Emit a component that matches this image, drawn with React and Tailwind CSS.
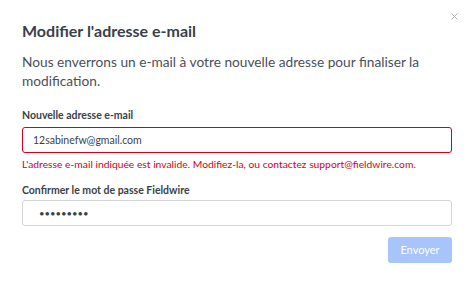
import React from 'react';

export default function App() {
  return (
    <div className="w-[474px] h-[286px] bg-white relative" style={{ fontFamily: 'Lato, "Open Sans", sans-serif' }}>
      <button className="absolute right-[16px] top-[13px] text-[#b5b8bd]">
        <svg width="7" height="7" viewBox="0 0 7 7" stroke="currentColor" strokeWidth="1">
          <path d="M0.5 0.5L6.5 6.5M6.5 0.5L0.5 6.5" />
        </svg>
      </button>
      <div className="px-[22px] pt-[20px]">
        <h2 className="text-[16px] leading-[22px] font-bold text-[#3a3f48]">Modifier l'adresse e-mail</h2>
        <p className="mt-[10px] text-[13.7px] leading-[19px] text-[#4a4f58]">
          Nous enverrons un e-mail à votre nouvelle adresse pour finaliser la modification.
        </p>
        <div className="mt-[18px]">
          <label className="block text-[10.5px] leading-[15px] font-bold text-[#3a3f48]">Nouvelle adresse e-mail</label>
          <input
            defaultValue="12sabinefw@gmail.com"
            className="mt-[4px] w-full h-[26px] px-[10px] rounded-[3px] border border-[#d0021b] text-[10.5px] text-[#3a3f48] outline-none"
            style={{ fontFamily: 'inherit' }}
          />
          <p className="mt-[4px] text-[10.3px] leading-[14px] text-[#d0021b]">
            L'adresse e-mail indiquée est invalide. Modifiez-la, ou contactez support@fieldwire.com.
          </p>
        </div>
        <div className="mt-[12px]">
          <label className="block text-[10.5px] leading-[15px] font-bold text-[#3a3f48]">Confirmer le mot de passe Fieldwire</label>
          <input
            type="password"
            defaultValue="123456789"
            className="mt-[2px] w-full h-[26px] pl-[16px] pr-[10px] rounded-[3px] border border-[#d3d5d9] text-[9.5px] text-[#3a3f48] outline-none"
            style={{ fontFamily: 'inherit' }}
          />
        </div>
        <div className="mt-[11px] flex justify-end">
          <button disabled className="w-[64px] h-[26px] rounded-[3px] bg-[#a7c4fb] text-white text-[11px]">Envoyer</button>
        </div>
      </div>
    </div>
  );
}
